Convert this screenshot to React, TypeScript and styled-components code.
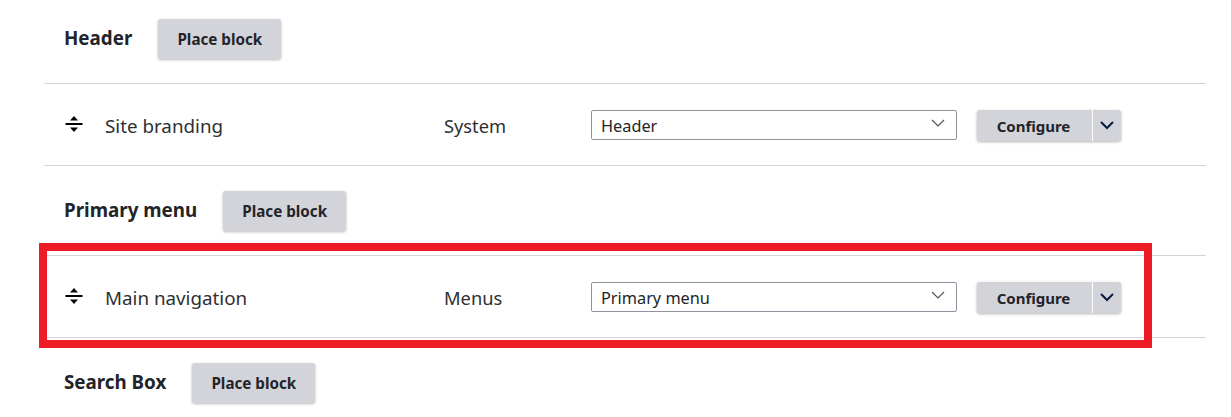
import React from "react";
import styled, { createGlobalStyle } from "styled-components";

const rows = [
  { kind: "region", title: "Header" },
  { kind: "block", title: "Site branding", category: "System", region: "Header" },
  { kind: "region", title: "Primary menu" },
  { kind: "block", title: "Main navigation", category: "Menus", region: "Primary menu" },
  { kind: "region", title: "Search Box" },
];

function DragHandle() {
  return (
    <HandleIcon width="18" height="18" viewBox="0 0 18 18">
      <path d="M9 1L13 5.5H5z" fill="#000" />
      <rect x="0.5" y="8" width="17" height="2" fill="#000" />
      <path d="M9 17L5 12.5h8z" fill="#000" />
    </HandleIcon>
  );
}

export default function App() {
  return (
    <Page>
      <GlobalStyle />
      <RowList>
        {rows.map((row) =>
          row.kind === "region" ? (
            <RegionRow key={row.title}>
              <RegionTitle>{row.title}</RegionTitle>
              <PlaceButton>Place block</PlaceButton>
            </RegionRow>
          ) : (
            <BlockRow key={row.title}>
              <DragHandle />
              <BlockTitle>{row.title}</BlockTitle>
              <Category>{row.category}</Category>
              <RegionSelect>
                <span>{row.region}</span>
                <svg width="14" height="8" viewBox="0 0 14 8">
                  <path d="M1 1l6 6 6-6" fill="none" stroke="#55565b" strokeWidth="1.2" />
                </svg>
              </RegionSelect>
              <SplitButton>
                <ConfigureLabel>Configure</ConfigureLabel>
                <ToggleButton>
                  <svg width="14" height="9" viewBox="0 0 14 9">
                    <path d="M1 1l6 6 6-6" fill="none" stroke="#0b1a42" strokeWidth="2" />
                  </svg>
                </ToggleButton>
              </SplitButton>
            </BlockRow>
          )
        )}
      </RowList>
      <Highlight />
    </Page>
  );
}

const GlobalStyle = createGlobalStyle`
  html, body {
    margin: 0;
    background: #fff;
  }
  body {
    font-family: "Noto Sans", "Open Sans", sans-serif;
    color: #232429;
    overflow: hidden;
  }
`;

const Page = styled.div`
  position: relative;
  width: 1231px;
  height: 417px;
  padding-left: 44px;
  padding-right: 25px;
  box-sizing: border-box;
  overflow: hidden;
`;

const RowList = styled.div`
  margin-top: -6px;
`;

const RegionRow = styled.div`
  height: 90px;
  box-sizing: border-box;
  display: flex;
  align-items: center;
  padding-left: 20px;
  gap: 26px;
  border-bottom: 1px solid #d4d4d8;

  &:last-of-type {
    border-bottom: none;
  }
`;

const RegionTitle = styled.h2`
  margin: 0 0 2px;
  font-size: 18.8px;
  font-weight: 700;
  line-height: 24px;
`;

const PlaceButton = styled.button`
  width: 123px;
  height: 40px;
  border: none;
  border-radius: 3px;
  padding: 0;
  background: #d3d4d9;
  box-shadow: 0 1px 3px rgba(0, 0, 0, 0.28);
  font-family: inherit;
  font-size: 15.2px;
  font-weight: 700;
  color: #232429;
`;

const BlockRow = styled.div`
  height: 82px;
  box-sizing: border-box;
  display: flex;
  align-items: center;
  padding-left: 21px;
  border-bottom: 1px solid #d4d4d8;
`;

const HandleIcon = styled.svg`
  flex: none;
  margin-top: -2px;
`;

const BlockTitle = styled.div`
  width: 339px;
  margin-left: 22px;
  padding-top: 2px;
  font-size: 18.8px;
  color: #2e2f34;
`;

const Category = styled.div`
  width: 147px;
  padding-top: 2px;
  font-size: 18.3px;
  color: #2e2f34;
`;

const RegionSelect = styled.div`
  width: 366px;
  height: 30px;
  box-sizing: border-box;
  display: flex;
  align-items: center;
  justify-content: space-between;
  padding: 2px 11px 0 9px;
  border: 1px solid #8e929c;
  border-radius: 2px;
  font-size: 16.3px;
  color: #232429;

  svg {
    margin-top: -6px;
  }
`;

const SplitButton = styled.div`
  display: flex;
  height: 31px;
  margin-left: 20px;
  margin-top: 2px;
  border-radius: 3px;
  background: #d3d4d9;
  box-shadow: 0 1px 3px rgba(0, 0, 0, 0.3);
`;

const ConfigureLabel = styled.div`
  width: 113px;
  padding-right: 2px;
  display: flex;
  align-items: center;
  justify-content: center;
  font-size: 15px;
  font-weight: 700;
  color: #232429;
`;

const ToggleButton = styled.div`
  width: 28px;
  display: flex;
  align-items: center;
  justify-content: center;
  border-left: 1px solid #fff;
`;

const Highlight = styled.div`
  position: absolute;
  left: 39px;
  top: 243px;
  width: 1113px;
  height: 105px;
  box-sizing: border-box;
  border: 8px solid #ee1c25;
  pointer-events: none;
`;
